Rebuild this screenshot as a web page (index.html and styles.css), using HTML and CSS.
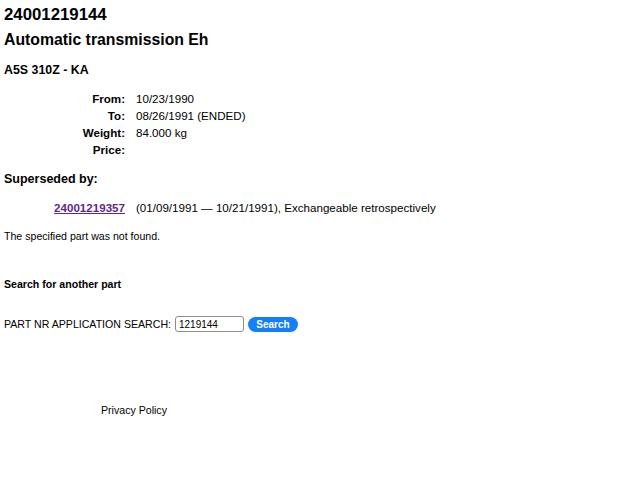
FILE: index.html
```html
<!DOCTYPE html>
<html lang="en">
<head>
    <meta charset="UTF-8">
    <meta name="viewport" content="width=device-width, initial-scale=1.0">
    <title>24001219144 - Automatic transmission Eh</title>
    <link rel="stylesheet" href="styles.css">
</head>
<body>
    <div class="part">
        <h1 class="part-number">24001219144</h1>
        <h2 class="part-name">Automatic transmission Eh</h2>
        <h3 class="part-model">A5S 310Z - KA</h3>

        <!-- Part details -->
        <div class="details">
            <span class="label">From:</span><span>10/23/1990</span>
            <span class="label">To:</span><span>08/26/1991 (ENDED)</span>
            <span class="label">Weight:</span><span>84.000 kg</span>
            <span class="label">Price:</span><span></span>
        </div>

        <h3 class="section-title">Superseded by:</h3>
        <div class="details superseded">
            <a class="label part-link" href="#">24001219357</a>
            <span>(01/09/1991 &mdash; 10/21/1991), Exchangeable retrospectively</span>
        </div>

        <p class="notice">The specified part was not found.</p>
    </div>

    <div class="search">
        <h4 class="search-title">Search for another part</h4>
        <form class="search-form" onsubmit="return false;">
            <label for="partnr">PART NR APPLICATION SEARCH:</label>
            <input type="text" id="partnr" class="search-input" value="1219144">
            <button type="submit" class="search-button">Search</button>
        </form>
    </div>

    <div class="footer">
        <a href="#">Privacy Policy</a>
    </div>
</body>
</html>
```

FILE: styles.css
```css
body {
    font-family: 'Liberation Sans', Arial, Helvetica, sans-serif;
    color: #000;
    background: #fff;
    margin: 0;
    padding: 4px;
}

h1, h2, h3, h4, p {
    margin: 0;
}

.part-number {
    font-size: 16.8px;
    line-height: 22px;
}

.part-name {
    font-size: 15.8px;
    line-height: 22px;
    margin-top: 3px;
}

.part-model {
    font-size: 12.4px;
    line-height: 16px;
    margin-top: 11px;
}

.details {
    display: grid;
    grid-template-columns: 121px auto;
    column-gap: 11px;
    font-size: 11.6px;
    line-height: 17px;
    margin-top: 12px;
}

.details .label {
    text-align: right;
    font-weight: bold;
}

.section-title {
    font-size: 12.5px;
    line-height: 18px;
    margin-top: 12px;
}

.superseded {
    margin-top: 11px;
}

.part-link {
    color: #5b2a8c;
}

.notice {
    font-size: 10.6px;
    line-height: 14px;
    margin-top: 13px;
}

.search {
    margin-top: 34px;
}

.search-title {
    font-size: 10.6px;
    line-height: 14px;
}

.search-form {
    display: flex;
    align-items: center;
    font-size: 10.6px;
    margin-top: 25px;
}

.search-input {
    width: 61px;
    height: 12px;
    margin: 0 4px;
    padding: 1px 3px;
    border: 1px solid #8e8e8e;
    border-radius: 3px;
    font-family: inherit;
    font-size: 10px;
}

.search-button {
    background: #157efb;
    color: #fff;
    border: none;
    border-radius: 8px;
    padding: 0;
    width: 50px;
    height: 15px;
    font-family: inherit;
    font-size: 10px;
    font-weight: bold;
}

.footer {
    margin-top: 72px;
    padding-left: 97px;
    font-size: 10.6px;
}

.footer a {
    color: #000;
    text-decoration: none;
}
```
